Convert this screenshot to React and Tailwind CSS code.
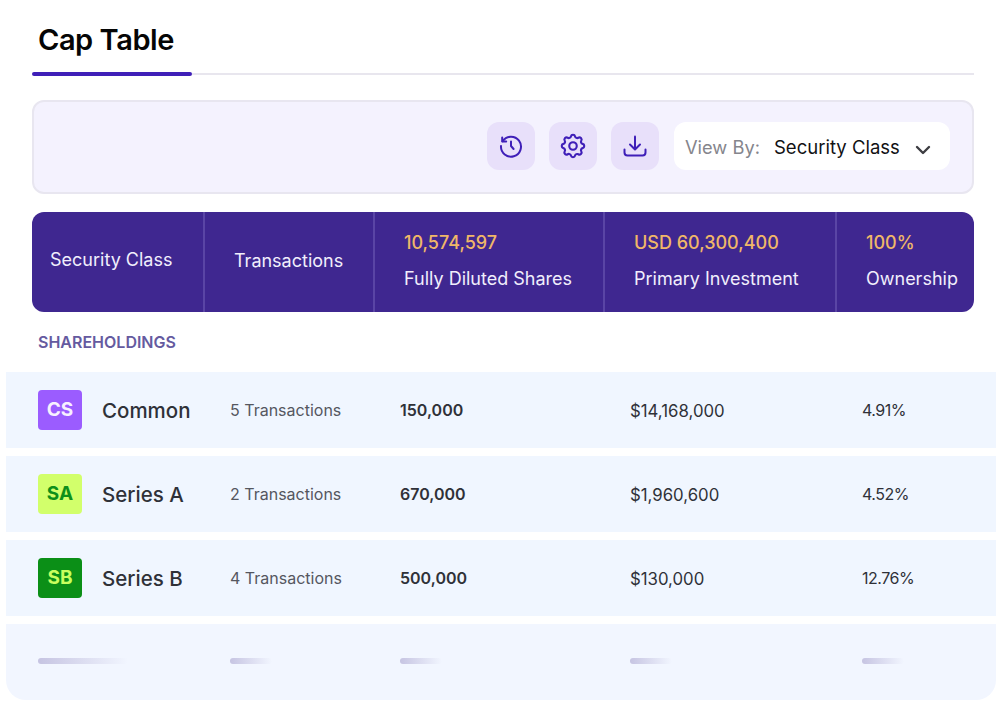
import { TbSettings } from "react-icons/tb";

const rows = [
  { code: "CS", name: "Common", badge: "bg-[#9b5cff] text-[#f7f0ff]", tx: "5 Transactions", shares: "150,000", money: "$14,168,000", own: "4.91%" },
  { code: "SA", name: "Series A", badge: "bg-[#d2ff6b] text-[#0d8f1a]", tx: "2 Transactions", shares: "670,000", money: "$1,960,600", own: "4.52%" },
  { code: "SB", name: "Series B", badge: "bg-[#0b8f17] text-[#c8ff5e]", tx: "4 Transactions", shares: "500,000", money: "$130,000", own: "12.76%" },
];

const rowGrid = "grid grid-cols-[192px_170px_230px_232px_1fr] items-center pl-8 bg-[#f0f6ff] h-[76px]";

function HistoryIcon() {
  return (
    <svg width="24" height="24" viewBox="0 0 24 24" fill="none" stroke="#3f1fb8" strokeWidth="2" strokeLinecap="round" strokeLinejoin="round">
      <path d="M3.6 7.2A10 10 0 1 1 2 12" />
      <path d="M3.2 3.4v4h4" />
      <path d="M12 7.5V12l2.6 3" />
    </svg>
  );
}

function DownloadIcon() {
  return (
    <svg width="24" height="24" viewBox="0 0 24 24" fill="none" stroke="#3f1fb8" strokeWidth="2" strokeLinecap="round" strokeLinejoin="round">
      <path d="M12 2.5V15" />
      <path d="M7 10.5l5 5 5-5" />
      <path d="M1.5 15.5v3a3 3 0 0 0 3 3h15a3 3 0 0 0 3-3v-3" />
    </svg>
  );
}

function ChevronIcon() {
  return (
    <svg className="ml-[15px] mt-1" width="16" height="10" viewBox="0 0 16 10" fill="none" stroke="#3d3d42" strokeWidth="2.4" strokeLinecap="round" strokeLinejoin="round">
      <path d="M2 2l6 6 6-6" />
    </svg>
  );
}

function IconButton({ children }) {
  return (
    <div className="w-12 h-12 rounded-xl bg-[#e8e0fa] flex items-center justify-center">
      {children}
    </div>
  );
}

function HeaderStat({ value, label, className }) {
  return (
    <div className={className}>
      <div className="text-[#f0b768] text-lg font-medium leading-6">{value}</div>
      <div className="text-[#f1eefc] text-lg leading-6 mt-3">{label}</div>
    </div>
  );
}

function SkeletonBar({ className }) {
  return <div className={`h-1.5 -mt-0.5 rounded-full bg-gradient-to-r from-[#c6c4e2] to-transparent ${className}`}></div>;
}

export default function App() {
  return (
    <div className="w-[1002px] h-[706px] bg-white overflow-hidden font-['Inter',sans-serif]">
      <div className="pl-8 pr-7 pt-[20px]">
        <h1 className="text-[29px] leading-10 font-semibold text-[#050505] pl-1.5 tracking-[-0.45px]">Cap Table</h1>
        <div className="mt-3 h-1 flex items-center">
          <div className="w-40 h-1 rounded-full bg-[#3f1fb8]"></div>
          <div className="flex-1 h-0.5 bg-[#e8e6ee]"></div>
        </div>

        <div className="mt-6 h-[94px] pb-0.5 rounded-xl border-2 border-[#e8e6f0] bg-[#f4f2fe] flex items-center justify-end gap-[14px] pr-[22px]">
          <IconButton><HistoryIcon /></IconButton>
          <IconButton><TbSettings size={30} strokeWidth={1.7} color="#3f1fb8" /></IconButton>
          <IconButton><DownloadIcon /></IconButton>
          <div className="w-[276px] h-12 ml-px pt-1 rounded-xl bg-white flex items-center pl-[11px] text-[18.3px]">
            <span className="text-[#85858c]">View By:</span>
            <span className="text-[#111114] ml-[14px] text-[18.5px]">Security Class</span>
            <ChevronIcon />
          </div>
        </div>

        <div className="mt-[18px] h-[100px] rounded-xl bg-[#3f2790] flex text-lg text-[#f1eefc] divide-x-2 divide-[#5a45a5]">
          <div className="w-[173px] pl-[18px] pb-1 flex items-center">Security Class</div>
          <div className="w-[170px] pl-[29px] pb-0.5 flex items-center">Transactions</div>
          <HeaderStat className="w-[230px] pl-[29px] pt-[19px]" value="10,574,597" label="Fully Diluted Shares" />
          <HeaderStat className="w-[232px] pl-[29px] pt-[19px]" value="USD 60,300,400" label="Primary Investment" />
          <HeaderStat className="flex-1 pl-[29px] pt-[19px]" value="100%" label="Ownership" />
        </div>

        <div className="mt-[20px] pl-1.5 text-base leading-5 font-semibold text-[#655a9f]">SHAREHOLDINGS</div>
      </div>

      <div className="mt-5 mx-1.5 flex flex-col gap-2">
        {rows.map((row) => (
          <div key={row.code} className={rowGrid}>
            <div className="flex items-center">
              <div className={`w-11 h-10 rounded flex items-center justify-center text-[19px] font-bold ${row.badge}`}>{row.code}</div>
              <div className="ml-5 mt-0.5 text-[20.5px] font-medium text-[#2f3138]">{row.name}</div>
            </div>
            <div className="text-base text-[#55575f]">{row.tx}</div>
            <div className="text-base font-semibold text-[#2f3138]">{row.shares}</div>
            <div className="mt-1 text-[16.8px] text-[#2f3138]">{row.money}</div>
            <div className="text-base tracking-[-0.5px] text-[#2f3138]">{row.own}</div>
          </div>
        ))}
        <div className={`${rowGrid} rounded-b-[20px] bg-[#f2f6ff]`}>
          <SkeletonBar className="w-[90px]" />
          <SkeletonBar className="w-[42px]" />
          <SkeletonBar className="w-[42px]" />
          <SkeletonBar className="w-[42px]" />
          <SkeletonBar className="w-[42px]" />
        </div>
      </div>
    </div>
  );
}
